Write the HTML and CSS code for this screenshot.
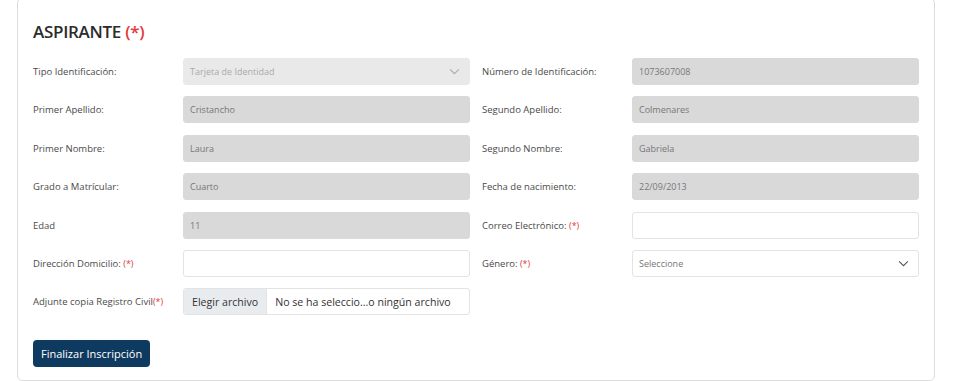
FILE: index.html
```html
<!DOCTYPE html>
<html lang="es">
<head>
    <meta charset="UTF-8">
    <meta name="viewport" content="width=device-width, initial-scale=1.0">
    <title>Inscripción</title>
    <link rel="stylesheet" href="styles.css">
</head>
<body>
    <div class="card">
        <h2 class="card-title">ASPIRANTE <span class="req">(*)</span></h2>

        <div class="form-grid">
            <!-- Fila 1 -->
            <div class="field">
                <label>Tipo Identificación:</label>
                <div class="control select light">
                    <span class="muted">Tarjeta de Identidad</span>
                    <svg class="chevron" viewBox="0 0 12 8"><path d="M1 1.5l5 5 5-5"/></svg>
                </div>
            </div>
            <div class="field">
                <label>Número de Identificación:</label>
                <div class="control disabled">1073607008</div>
            </div>

            <!-- Fila 2 -->
            <div class="field">
                <label>Primer Apellido:</label>
                <div class="control disabled">Cristancho</div>
            </div>
            <div class="field">
                <label>Segundo Apellido:</label>
                <div class="control disabled">Colmenares</div>
            </div>

            <!-- Fila 3 -->
            <div class="field">
                <label>Primer Nombre:</label>
                <div class="control disabled">Laura</div>
            </div>
            <div class="field">
                <label>Segundo Nombre:</label>
                <div class="control disabled">Gabriela</div>
            </div>

            <!-- Fila 4 -->
            <div class="field">
                <label>Grado a Matrícular:</label>
                <div class="control disabled">Cuarto</div>
            </div>
            <div class="field">
                <label>Fecha de nacimiento:</label>
                <div class="control disabled">22/09/2013</div>
            </div>

            <!-- Fila 5 -->
            <div class="field">
                <label>Edad</label>
                <div class="control disabled">11</div>
            </div>
            <div class="field">
                <label>Correo Electrónico: <span class="req">(*)</span></label>
                <div class="control"></div>
            </div>

            <!-- Fila 6 -->
            <div class="field">
                <label>Dirección Domicilio: <span class="req">(*)</span></label>
                <div class="control"></div>
            </div>
            <div class="field">
                <label>Género: <span class="req">(*)</span></label>
                <div class="control select">
                    <span>Seleccione</span>
                    <svg class="chevron dark" viewBox="0 0 12 8"><path d="M1 1.5l5 5 5-5"/></svg>
                </div>
            </div>

            <!-- Fila 7 -->
            <div class="field">
                <label>Adjunte copia Registro Civil<span class="req">(*)</span></label>
                <div class="control file">
                    <span class="file-btn">Elegir archivo</span>
                    <span class="file-name">No se ha seleccio...o ningún archivo</span>
                </div>
            </div>
        </div>

        <button class="btn-primary">Finalizar Inscripción</button>
    </div>
</body>
</html>
```

FILE: styles.css
```css
/* General */
body {
    margin: 0;
    background: #fff;
    font-family: 'Open Sans', sans-serif;
    color: #444;
}

/* Card */
.card {
    margin: -2px 25px 0 17px;
    padding: 21px 15px 13px 15px;
    border: 1px solid #dcdcdc;
    border-radius: 5px;
    background: #fff;
}

.card-title {
    margin: 0 0 15px 0;
    font-size: 17px;
    font-weight: 600;
    color: #2b2b2b;
    letter-spacing: -0.3px;
}

.req {
    color: #e03a3a;
}

/* Form grid */
.form-grid {
    display: grid;
    grid-template-columns: 1fr 1fr;
    column-gap: 12px;
    row-gap: 11.4px;
}

.field {
    display: flex;
    align-items: center;
}

.field label {
    width: 150px;
    flex-shrink: 0;
    font-size: 9.5px;
    color: #4a4a4a;
}

.field .req {
    font-size: 9px;
}

.control {
    flex: 1;
    height: 27px;
    box-sizing: border-box;
    display: flex;
    align-items: center;
    padding: 0 6px;
    border: 1px solid #e3e3e3;
    border-radius: 3px;
    background: #fff;
    font-size: 9px;
    color: #777;
}

.control.disabled {
    background: #d9d9d9;
    border-color: #d9d9d9;
}

.control.light {
    background: #e9e9e9;
    border-color: #e9e9e9;
}

.control .muted {
    color: #aaa;
}

.select {
    justify-content: space-between;
    padding-right: 9px;
}

.chevron {
    width: 11px;
    height: 7px;
    fill: none;
    stroke: #aaa;
    stroke-width: 1.2;
}

.chevron.dark {
    stroke: #555;
}

/* File input */
.control.file {
    padding: 0;
    overflow: hidden;
    white-space: nowrap;
    font-size: 10.6px;
    color: #333;
}

.file-btn {
    height: 100%;
    display: flex;
    align-items: center;
    padding: 0 8px;
    background: #e9ecef;
    border-right: 1px solid #e3e3e3;
}

.file-name {
    padding-left: 8px;
}

/* Button */
.btn-primary {
    margin-top: 25px;
    height: 27px;
    padding: 0 8px;
    border: none;
    border-radius: 4px;
    background: #0f3a5f;
    color: #fff;
    font-family: 'Open Sans', sans-serif;
    font-size: 11px;
}
```
